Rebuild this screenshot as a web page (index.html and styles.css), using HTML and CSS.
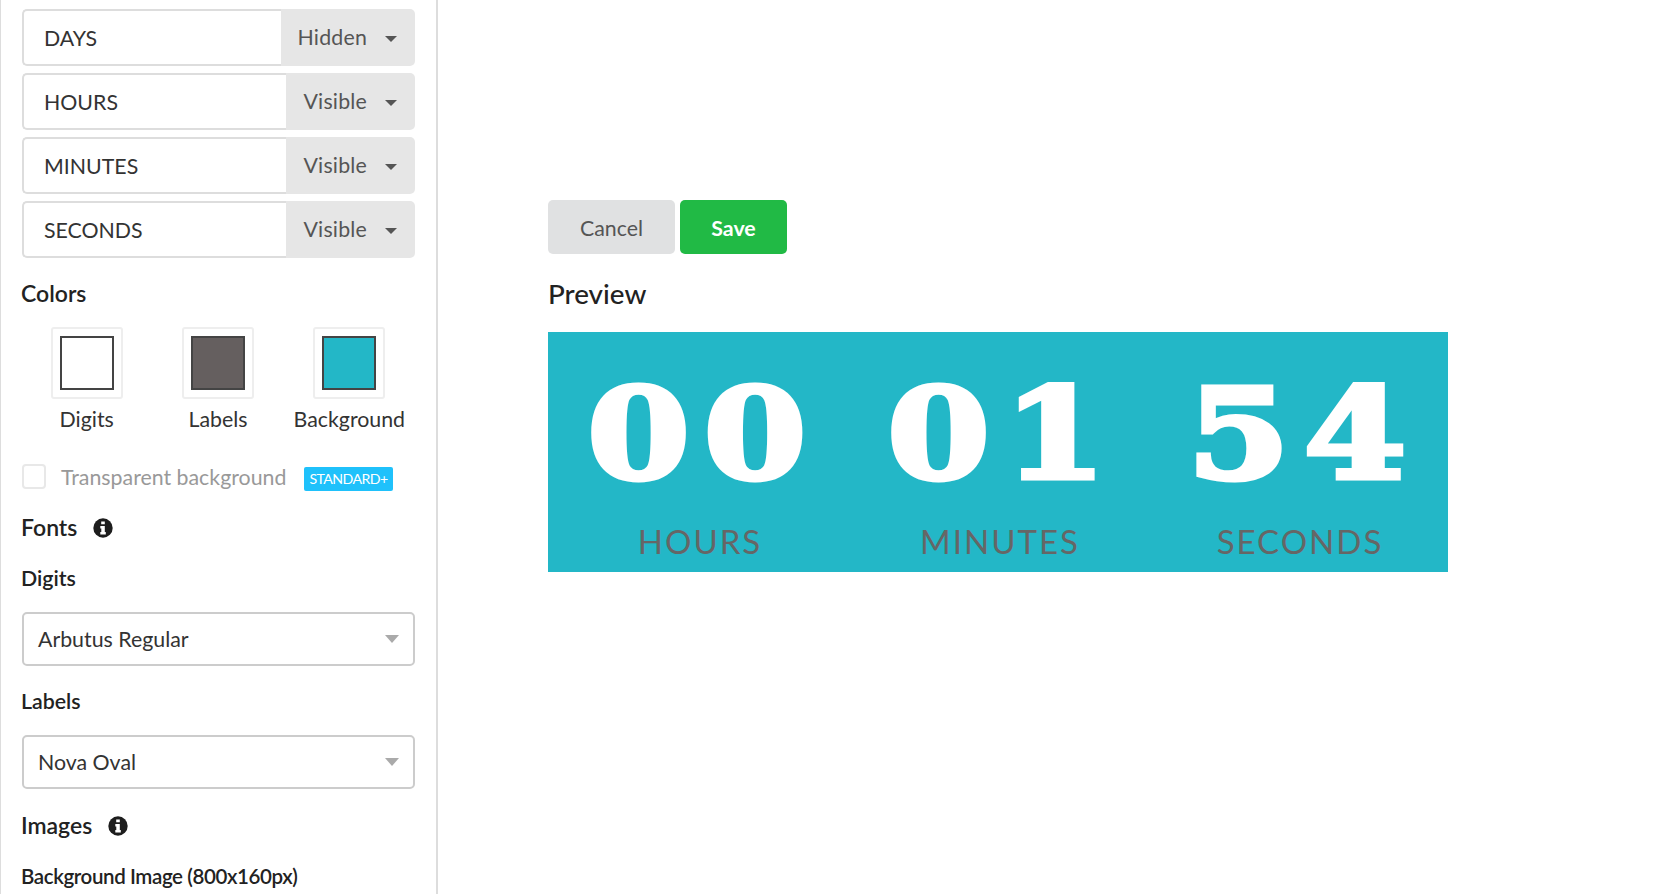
FILE: index.html
```html
<!DOCTYPE html>
<html lang="en">
  <head>
    <meta charset="UTF-8" />
    <title>Countdown timer settings</title>
    <link rel="stylesheet" href="styles.css">
  </head>
  <body>
    <div class="app">
      <aside class="sidebar">
        <div class="unit-row">
          <div class="unit-name">DAYS</div>
          <div class="unit-state">Hidden<i class="caret"></i></div>
        </div>
        <div class="unit-row">
          <div class="unit-name">HOURS</div>
          <div class="unit-state">Visible<i class="caret"></i></div>
        </div>
        <div class="unit-row">
          <div class="unit-name">MINUTES</div>
          <div class="unit-state">Visible<i class="caret"></i></div>
        </div>
        <div class="unit-row">
          <div class="unit-name">SECONDS</div>
          <div class="unit-state">Visible<i class="caret"></i></div>
        </div>

        <h3 class="colors-title">Colors</h3>
        <div class="swatches">
          <div class="swatch">
            <div class="swatch-frame"><div class="swatch-fill fill-white"></div></div>
            <span>Digits</span>
          </div>
          <div class="swatch">
            <div class="swatch-frame"><div class="swatch-fill fill-gray"></div></div>
            <span>Labels</span>
          </div>
          <div class="swatch">
            <div class="swatch-frame"><div class="swatch-fill fill-teal"></div></div>
            <span>Background</span>
          </div>
        </div>

        <div class="transparent-row">
          <div class="checkbox"></div>
          <span class="transparent-label">Transparent background</span>
          <span class="badge">STANDARD+</span>
        </div>

        <h3 class="fonts-title">Fonts
          <svg class="info" viewBox="0 0 20 20"><circle cx="10" cy="10" r="9.7" fill="#1d1d1d"/><path fill="#fff" d="M8.2 3.4h3.6v2.9H8.2zM7.3 8h4.5v6.1h1v2.5H7.3v-2.5h1v-3.6h-1z"/></svg>
        </h3>
        <h4 class="digits-title">Digits</h4>
        <div class="font-select">Arbutus Regular<i class="caret-big"></i></div>
        <h4 class="labels-title">Labels</h4>
        <div class="font-select">Nova Oval<i class="caret-big"></i></div>
        <h3 class="images-title">Images
          <svg class="info" viewBox="0 0 20 20"><circle cx="10" cy="10" r="9.7" fill="#1d1d1d"/><path fill="#fff" d="M8.2 3.4h3.6v2.9H8.2zM7.3 8h4.5v6.1h1v2.5H7.3v-2.5h1v-3.6h-1z"/></svg>
        </h3>
        <h4 class="bgimage-title">Background Image (800x160px)</h4>
      </aside>

      <main class="main">
        <div class="actions">
          <button class="btn btn-cancel">Cancel</button>
          <button class="btn btn-save">Save</button>
        </div>
        <h2 class="preview-title">Preview</h2>
        <div class="timer">
          <div class="timer-col">
            <div class="digits">00</div>
            <div class="timer-label">HOURS</div>
          </div>
          <div class="timer-col">
            <div class="digits">01</div>
            <div class="timer-label">MINUTES</div>
          </div>
          <div class="timer-col">
            <div class="digits">54</div>
            <div class="timer-label">SECONDS</div>
          </div>
        </div>
      </main>
    </div>
  </body>
</html>
```

FILE: styles.css
```css
html,
body {
  margin: 0;
  padding: 0;
  height: 894px;
  overflow: hidden;
  background: #fff;
}
body {
  font-family: "Lato", "Open Sans", sans-serif;
  font-size: 21.33px;
  color: #333;
}
.app {
  display: flex;
  height: 894px;
}

/* left panel */
.sidebar {
  box-sizing: border-box;
  width: 438px;
  height: 894px;
  padding: 9px 21px 0 21px;
  border-left: 1px solid #ddd;
  border-right: 2px solid #ddd;
  overflow: hidden;
}
.unit-row {
  display: flex;
  height: 57px;
  margin-bottom: 7px;
}
.unit-name {
  flex: 1;
  box-sizing: border-box;
  padding-left: 20px;
  line-height: 55px;
  border: 2px solid #ddd;
  border-right: 0;
  border-radius: 5px 0 0 5px;
}
.unit-state {
  display: flex;
  align-items: center;
  padding: 0 18px 2px 17px;
  background: #e6e6e6;
  color: #555;
  letter-spacing: 0.2px;
  border-radius: 0 5px 5px 0;
}
.caret {
  width: 0;
  height: 0;
  margin-left: 18px;
  margin-top: 4px;
  border-left: 6px solid transparent;
  border-right: 6px solid transparent;
  border-top: 6px solid #555;
}
h3,
h4 {
  margin: 0 0 0 -1px;
  font-weight: 600;
  color: #222;
  line-height: 30px;
}
h3 {
  font-size: 23px;
}
h4 {
  font-size: 21.33px;
}
.colors-title {
  margin-top: 20px;
}
.swatches {
  display: grid;
  grid-template-columns: repeat(3, 1fr);
  margin: 19px 0 0 -1px;
}
.swatch {
  display: flex;
  flex-direction: column;
  align-items: center;
}
.swatch span {
  margin-top: 6px;
  line-height: 28px;
}
.swatch-frame {
  box-sizing: border-box;
  width: 72px;
  height: 72px;
  padding: 7px;
  border: 2px solid #eee;
  border-radius: 3px;
}
.swatch-fill {
  box-sizing: border-box;
  width: 54px;
  height: 54px;
  border: 2px solid #444;
}
.fill-white {
  background: #fff;
}
.fill-gray {
  background: #655f5f;
}
.fill-teal {
  background: #23b7c7;
}
.transparent-row {
  display: flex;
  align-items: center;
  margin-top: 29px;
}
.checkbox {
  box-sizing: border-box;
  width: 24px;
  height: 25px;
  border: 2px solid #e8e8e8;
  border-radius: 4px;
}
.transparent-label {
  margin-left: 15px;
  color: #999;
  white-space: nowrap;
}
.badge {
  margin-left: 18px;
  margin-top: 5px;
  padding: 0 5px;
  height: 24px;
  line-height: 24px;
  font-size: 14.2px;
  letter-spacing: -0.6px;
  color: #fff;
  background: #1fc1fb;
  border-radius: 2px;
}
.fonts-title {
  margin-top: 21px;
}
.info {
  width: 20px;
  height: 20px;
  margin-left: 10px;
  vertical-align: -2px;
}
.digits-title {
  margin-top: 21px;
}
.font-select {
  position: relative;
  box-sizing: border-box;
  height: 54px;
  margin-top: 19px;
  padding-left: 14px;
  line-height: 50px;
  border: 2px solid #ccc;
  border-radius: 5px;
}
.caret-big {
  position: absolute;
  right: 14px;
  top: 21px;
  width: 0;
  height: 0;
  border-left: 7.5px solid transparent;
  border-right: 7.5px solid transparent;
  border-top: 8px solid #aaa;
}
.labels-title {
  margin-top: 20px;
  margin-bottom: -1px;
}
.labels-title + .font-select {
  margin-top: 20px;
}
.images-title {
  margin-top: 21px;
}
.bgimage-title {
  margin-top: 21px;
  font-size: 20.5px;
  letter-spacing: -0.4px;
  white-space: nowrap;
}

/* right side */
.main {
  padding: 200px 0 0 110px;
}
.actions {
  display: flex;
  gap: 5px;
}
.btn {
  height: 54px;
  padding: 2px 0 0;
  border: 0;
  border-radius: 5px;
  font-family: inherit;
  font-size: 21.33px;
}
.btn-cancel {
  width: 127px;
  background: #e0e1e2;
  color: #555;
}
.btn-save {
  width: 107px;
  background: #21ba45;
  color: #fff;
  font-weight: 700;
}
.preview-title {
  margin: 21px 0 20px;
  font-size: 27.8px;
  font-weight: 500;
  line-height: 37px;
  color: #222;
}
.timer {
  display: flex;
  width: 900px;
  height: 240px;
  background: #23b7c7;
  overflow: hidden;
}
.timer-col {
  width: 300px;
  text-align: center;
}
.digits {
  box-sizing: border-box;
  margin-top: 27px;
  padding-left: 10px;
  height: 150px;
  font-family: "DejaVu Serif", serif;
  font-weight: 700;
  font-size: 126px;
  line-height: 150px;
  letter-spacing: 12px;
  color: #fff;
  -webkit-text-stroke: 5px #fff;
  transform: scaleX(1.17);
}
.timer-label {
  margin-top: 12px;
  padding-left: 4px;
  font-family: "Lato", sans-serif;
  font-size: 33px;
  line-height: 40px;
  letter-spacing: 2px;
  color: #666;
}
```
